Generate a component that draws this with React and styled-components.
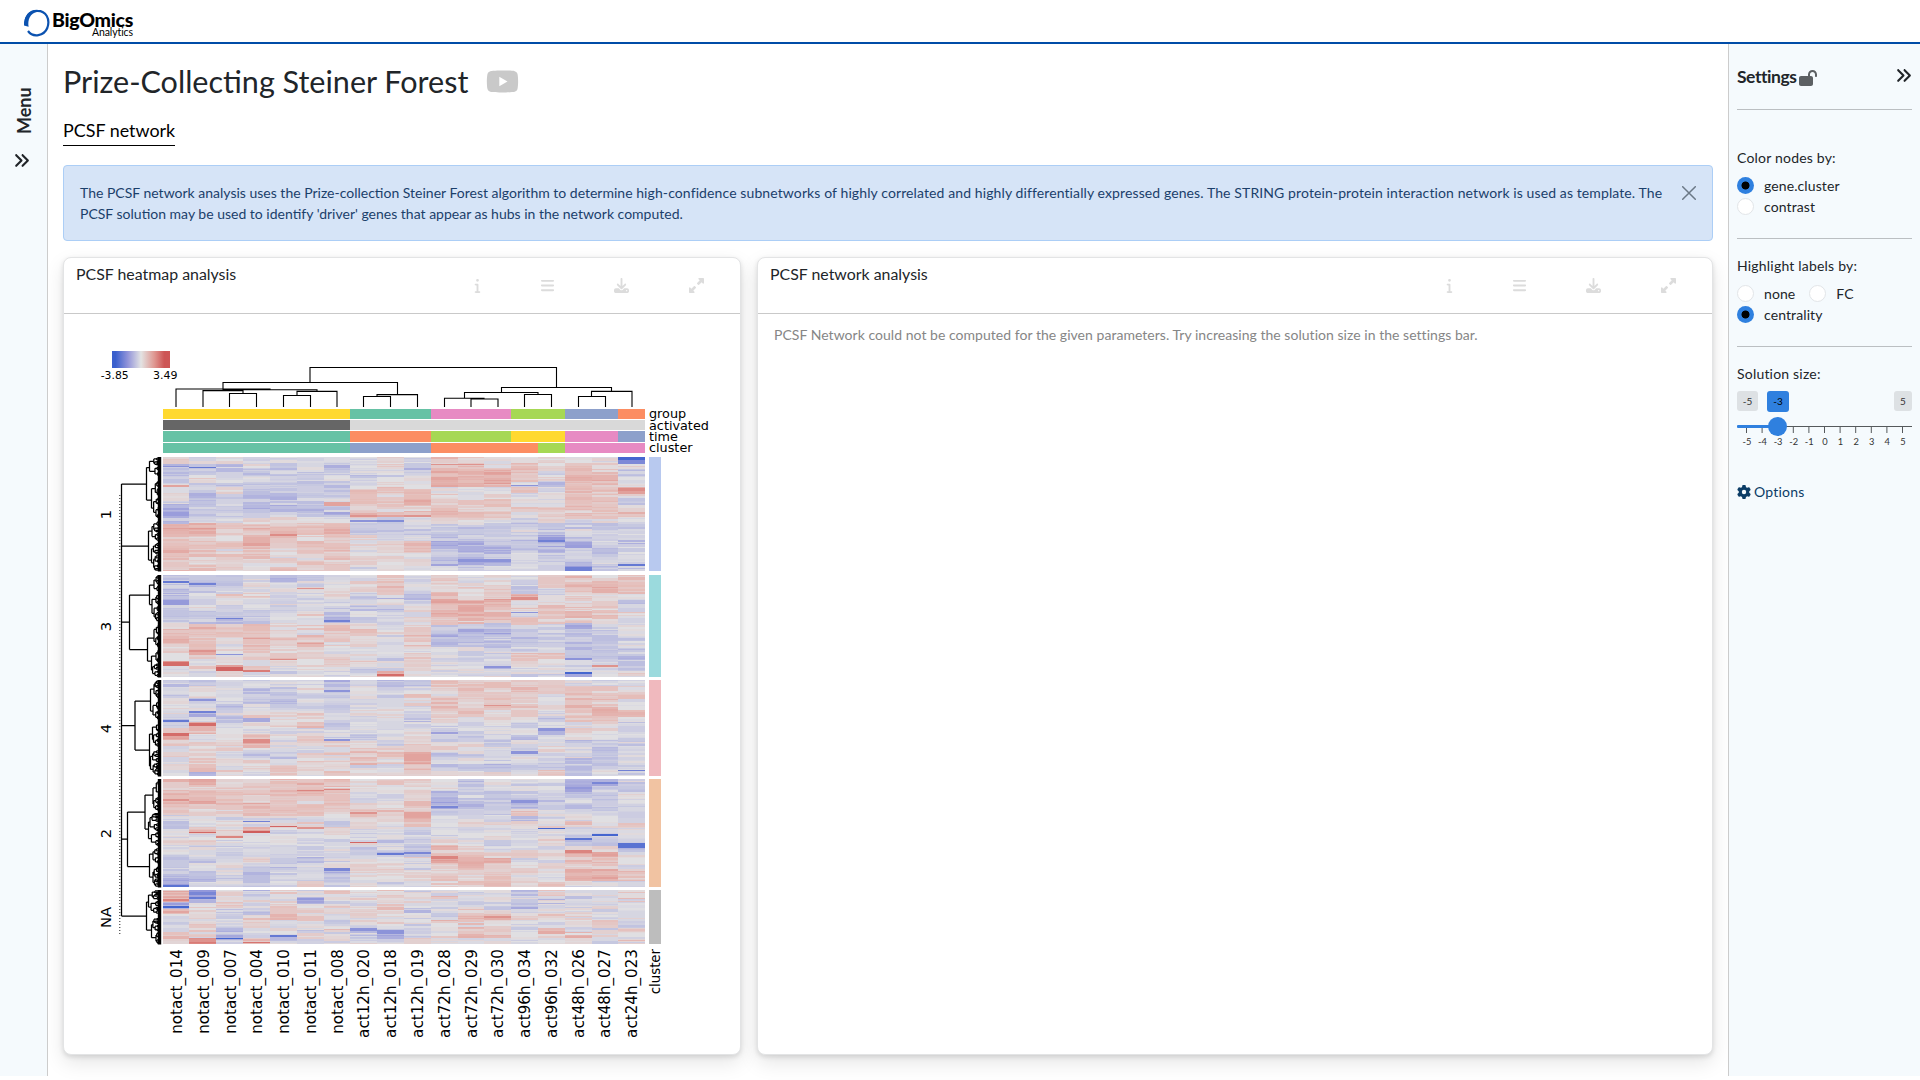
import React from 'react';
import styled, { createGlobalStyle, css } from 'styled-components';
import {
  FaYoutube, FaInfo, FaBars, FaDownload, FaAnglesRight, FaLockOpen, FaGear,
  FaUpRightAndDownLeftFromCenter,
} from 'react-icons/fa6';

const Global = createGlobalStyle`
  *, *::before { box-sizing: border-box; }
  body { margin: 0; background: #fff; color: #212529; font: 14px/21px Lato, sans-serif; overflow: hidden; }
`;

const Page = styled.div`
  display: flex;
  flex-direction: column;
  height: 1080px;
  width: 1920px;
`;
const Header = styled.header`
  height: 44px;
  flex: none;
  border-bottom: 2px solid #004ca7;
  padding: 9px 0 0 23px;
  display: flex;
  gap: 1px;
`;
const Brand = styled.div`
  display: flex;
  flex-direction: column;
  align-items: flex-end;
  width: 82px;
  color: #000;
`;
const BrandName = styled.div`
  font: 900 19.5px/22px Lato, sans-serif;
  letter-spacing: -0.3px;
  white-space: nowrap;
`;
const BrandSub = styled.div`
  font: 10.5px/10px Lato, sans-serif;
  margin-top: -4px;
  letter-spacing: -0.1px;
`;
const Body = styled.div`
  display: flex;
  height: 1036px;
`;
const LeftBar = styled.nav`
  width: 48px;
  height: 1032px;
  flex: none;
  background: #f5fafd;
  border-right: 1px solid #ccc;
  display: flex;
  flex-direction: column;
  align-items: center;
  padding: 43px 4px 0 0;
  gap: 18px;
`;
const MenuLabel = styled.div`
  writing-mode: vertical-rl;
  transform: rotate(180deg);
  font: 700 18px/22px Lato, sans-serif;
  height: 47px;
  margin-left: 4px;
`;
const Main = styled.main`
  flex: 1;
  min-width: 0;
  padding: 16px 15px 0;
  display: flex;
  flex-direction: column;
  overflow: hidden;
`;
const TitleRow = styled.div`
  display: flex;
  align-items: center;
  gap: 18px;
  height: 43px;
  color: #c9c9c9;
`;
const Title = styled.h1`
  margin: 0;
  color: #212529;
  font: 400 30.55px/42px Lato, sans-serif;
`;
const Tab = styled.div`
  align-self: flex-start;
  margin-top: 14px;
  height: 29px;
  border-bottom: 1px solid #000;
  color: #000;
  font: 17.9px/26px Lato, sans-serif;
`;
const Alert = styled.div`
  margin-top: 19px;
  height: 76px;
  border: 1px solid #accef6;
  border-radius: 4px;
  background: #d6e4f7;
  color: #1b3f6b;
  padding: 16px 16px 0 16px;
  display: flex;
  justify-content: space-between;
`;
const AlertText = styled.div`
  width: 1600px;
`;
const Spaced = styled.span`
  letter-spacing: 0.105px;
`;
const Cards = styled.div`
  display: flex;
  gap: 16px;
  margin-top: 16px;
`;
const Card = styled.section`
  width: ${(p) => p.$width}px;
  height: 798px;
  border: 1px solid #e3e4e5;
  border-radius: 8px;
  background: #fff;
  box-shadow: 0 8px 20px rgba(0, 0, 0, 0.1), 0 2px 5px rgba(0, 0, 0, 0.12);
`;
const CardHead = styled.div`
  height: 56px;
  border-bottom: 1px solid #c9c9c9;
  padding: 5px 36px 0 12px;
  display: flex;
  justify-content: space-between;
  font: 15.9px/22px Lato, sans-serif;
`;
const Tools = styled.div`
  display: flex;
  padding-top: 15px;
  color: #dcdcdc;
`;
const Tool = styled.span`
  display: flex;
  width: 16px;
  justify-content: center;
  margin-left: ${(p) => p.$gap}px;
`;
const Note = styled.p`
  margin: 10px 16px;
  color: #868686;
  letter-spacing: 0.035px;
`;
const RightBar = styled.aside`
  width: 192px;
  height: 1032px;
  flex: none;
  background: #f5fafd;
  border-left: 1px solid #ccc;
  padding: 21px 8px 0;
`;
const SettingsHead = styled.div`
  display: flex;
  height: 45px;
  border-bottom: 1px solid #bbbfc2;
  justify-content: space-between;
`;
const SettingsTitle = styled.div`
  display: flex;
  gap: 2px;
  font: 700 17.5px/24px Lato, sans-serif;
  letter-spacing: -0.45px;
  svg { margin-top: 4px; color: #5c6063; }
`;
const Group = styled.div`
  padding-top: ${(p) => p.$top}px;
  height: ${(p) => p.$height}px;
  border-bottom: ${(p) => (p.$last ? 0 : '1px solid #bbbfc2')};
`;
const Label = styled.div`
  letter-spacing: 0.2px;
  margin-bottom: 7px;
`;
const Options = styled.div`
  display: flex;
  flex-wrap: wrap;
  column-gap: 14px;
`;
const Radio = styled.label`
  display: flex;
  align-items: center;
  gap: 10px;
  height: 21px;
  letter-spacing: 0.1px;
  &::before {
    content: '';
    width: 17px;
    height: 17px;
    border-radius: 50%;
    background: #fff;
    border: 1px solid #e2e5e8;
    ${(p) => p.$on && css`
      border: 0;
      background: radial-gradient(circle, #000 3.6px, #2f80df 4.4px);
    `}
  }
`;
const OptionsLink = styled.div`
  display: flex;
  align-items: center;
  gap: 3px;
  color: #0b3c66;
  letter-spacing: 0.2px;
`;
const Badges = styled.div`
  display: flex;
  height: 21px;
`;
const Badge = styled.span`
  width: ${(p) => p.$w}px;
  height: ${(p) => (p.$on ? 21 : 20)}px;
  border-radius: 3px;
  background: ${(p) => (p.$on ? '#2f80df' : '#dde1e4')};
  margin-left: ${(p) => p.$ml}px;
  font: 10px/20px Lato, sans-serif;
  color: ${(p) => (p.$on ? '#000' : '#333')};
  text-align: center;
`;
const Scale = styled.svg`
  display: block;
  font-family: Lato, sans-serif;
  fill: #333;
`;
const CloseIcon = styled.svg`
  margin-top: 4px;
`;

const colEdges = [163, 189, 216, 243, 270, 297, 324, 350, 377, 404, 431, 458, 484, 511, 538, 565, 592, 618, 645];
const replicate = [0, 0, 0, 0, 0, 0, 0, 1, 1, 1, 2, 2, 2, 3, 3, 4, 4, 5];
const samples = ['notact_014', 'notact_009', 'notact_007', 'notact_004', 'notact_010', 'notact_011', 'notact_008',
  'act12h_020', 'act12h_018', 'act12h_019', 'act72h_028', 'act72h_029', 'act72h_030', 'act96h_034', 'act96h_032',
  'act48h_026', 'act48h_027', 'act24h_023'];

const G = '#66c2a5', O = '#fc8d62', B = '#8da0cb', P = '#e78ac3', L = '#a6d854', Y = '#ffd92f';
const annotations = [
  { name: 'group', y: 409, h: 10, base: 418, runs: [[163, Y], [350, G], [431, P], [511, L], [565, B], [618, O]] },
  { name: 'activated', y: 420, h: 10, base: 430, runs: [[163, '#666666'], [350, '#d9d9d9']] },
  { name: 'time', y: 431, h: 11, base: 441, runs: [[163, G], [350, O], [431, L], [511, Y], [565, P], [618, B]] },
  { name: 'cluster', y: 443, h: 10, base: 452, runs: [[163, G], [350, B], [431, O], [538, L], [565, P]] },
];

/* Expression profile of each cluster; one digit per sample, 0 = low, 9 = high. */
const slices = [
  { name: '1', y0: 457, y1: 571, label: 514, color: '#b8c9ef', noise: 0.8, rows: [
    '545444445465555440', '233434345366565655', '333333344377764663', '354433434477765774', '433333345477743665',
    '435333366644464668', '523223365654545664', '334333466766644663', '233222355565566665', '133343266666655666',
    '344555443455545454', '776666733333333333', '775676733333343444', '655765654433431333', '666766645622332243',
    '765655645632232434', '666655654433443434', '555555555521144344', '665565645443443133'] },
  { name: '3', y0: 575, y1: 677, label: 626, color: '#9bdadd', noise: 0.8, rows: [
    '333423446464546656', '323544456454535766', '334445556455534676', '345544533265574554', '144444444377755553',
    '343434333567656554', '333345344477746765', '332344244566665554', '676755654533343234', '666654665632233334',
    '765766654622333334', '664657554533333334', '575655444444444333', '554565543544466332', '845454654544454443',
    '458645534544344343', '445444447454444145'] },
  { name: '4', y0: 680, y1: 776, label: 728, color: '#f0b9be', noise: 0.8, rows: [
    '334444343366656444', '454345454456565665', '354333344556654666', '534324444565654664', '442433344465665764',
    '424555455456564666', '343255444354543664', '374456344444444443', '664444444444542553', '845656434543434444',
    '655745553544344333', '455444465654435434', '553335566733444434', '465545565744343334', '564565544633333334',
    '425465655555556344'] },
  { name: '2', y0: 779, y1: 887, label: 833, color: '#f1c3a2', noise: 0.8, rows: [
    '675566655543444224', '666667654543444133', '776666644533334334', '776565644623333434', '666766655622333334',
    '555666566633354434', '444444455744434443', '345465354645555655', '565744644344444444', '445444544444444344',
    '554454453354345333', '444444434365444552', '444444433366555774', '334533454587744664', '344334455456555664',
    '334344255556655776', '223244355565644776', '134345354456655444'] },
  { name: 'NA', y0: 890, y1: 944, label: 917, color: '#bdbdbd', noise: 1.2, rows: [
    '615354545444435545', '724442455554444345', '146454546544334444', '754365455345544444', '454575444446765545',
    '454544345465544554', '563554533446646445', '642435442456655654', '584643444544544545'] },
];
const streaks = [
  [0, 466, 1, -.6], [1, 467, 1, -.8], [0, 485, 2, .5], [7, 520, 2, -.6], [8, 520, 2, -.65], [7, 515, 2, .6], [8, 515, 2, .5], [9, 515, 2, .6],
  [4, 534, 2, .65], [6, 502, 4, .5], [14, 540, 2, -.75], [11, 559, 3, -.6], [12, 559, 3, -.6], [15, 567, 4, -.75], [17, 457, 3, -.95],
  [17, 564, 2, -.8], [17, 488, 3, .65], [13, 485, 1, -.6], [10, 464, 1, .6], [11, 464, 1, .6], [0, 581, 2, -.8], [1, 583, 2, -.75],
  [0, 600, 5, -.55], [5, 588, 1, .6], [2, 618, 1, -.75], [6, 620, 2, -.75], [13, 597, 3, .65], [13, 612, 1, -.6], [0, 662, 4, .85],
  [2, 667, 4, .9], [3, 670, 2, .75], [8, 674, 2, .85], [4, 659, 1, .65], [1, 650, 2, .6], [2, 654, 1, -.6], [12, 666, 2, -.6],
  [15, 672, 2, -.95], [15, 658, 2, -.6], [16, 665, 2, .6], [1, 711, 2, -.75], [0, 720, 2, -.8], [1, 723, 3, .85], [0, 733, 3, .85],
  [3, 739, 4, .65], [1, 699, 2, -.6], [6, 690, 2, -.6], [10, 732, 2, -.5], [14, 728, 3, -.6], [13, 751, 3, -.6], [9, 754, 7, .5],
  [17, 770, 1, -.75], [6, 739, 2, -.6], [12, 705, 1, .6], [0, 885, 2, -.85], [1, 832, 1, .9], [3, 831, 2, .95], [2, 836, 2, .7],
  [4, 826, 1, .9], [3, 821, 1, -.75], [7, 842, 1, .9], [8, 853, 2, -.8], [9, 852, 2, -.7], [5, 827, 2, .6], [6, 868, 3, -.7],
  [5, 790, 1, .7], [6, 789, 1, .7], [7, 812, 2, .6], [9, 812, 5, .5], [10, 806, 2, -.7], [14, 828, 1, -.95], [16, 834, 2, -.95],
  [15, 838, 2, -.85], [17, 843, 5, -.85], [10, 856, 3, .7], [15, 850, 3, .7], [13, 800, 3, -.6], [16, 782, 2, -.7], [0, 906, 2, -.95],
  [1, 892, 3, -.7], [1, 897, 2, -.8], [2, 938, 1, -.95], [4, 935, 2, -.8], [3, 942, 1, .8], [1, 939, 3, .6], [0, 899, 2, .7],
  [7, 928, 3, -.6], [8, 930, 4, -.6], [12, 916, 2, .6],
];

const stops = [[-1, 58, 95, 205], [-.75, 112, 128, 213], [-.5, 158, 160, 219], [-.25, 192, 194, 224], [0, 224, 223, 226],
  [.25, 229, 192, 188], [.5, 226, 163, 158], [.75, 217, 124, 119], [1, 205, 85, 85]];
function colorFor(v) {
  const c = Math.max(-1, Math.min(0.999, v));
  const i = Math.min(7, Math.floor((c + 1) * 4));
  const t = (c - stops[i][0]) * 4;
  return `rgb(${[1, 2, 3].map((k) => Math.round(stops[i][k] + (stops[i + 1][k] - stops[i][k]) * t)).join(',')})`;
}
function seeded(seed) {
  let s = seed;
  return () => {
    s = (s * 1664525 + 1013904223) % 4294967296;
    return s / 4294967296;
  };
}
function buildHeat() {
  const rnd = seeded(77);
  const paths = {};
  const put = (c, y, h, v) => {
    const key = colorFor(Math.round(v * 25) / 25);
    paths[key] = (paths[key] || '') + `M${colEdges[c]} ${y}H${colEdges[c + 1]}v${h}H${colEdges[c]}z`;
  };
  const bell = () => rnd() + rnd() + rnd() - 1.5;
  slices.forEach((s) => {
    const shared = Array.from({ length: 6 }, () => Array.from({ length: 120 }, bell));
    for (let c = 0; c < 18; c += 1) {
      let y = s.y0;
      while (y < s.y1) {
        const h = Math.min(s.y1 - y, rnd() < 0.5 ? 1 : rnd() < 0.7 ? 2 : 3);
        const row = s.rows[Math.min(s.rows.length - 1, Math.floor((y - s.y0) / 6))];
        const n = bell() * 0.17 * s.noise + shared[replicate[c]][y - s.y0] * 0.08;
        put(c, y, h, (Number(row[c]) - 4.4) * 0.145 + n);
        y += h;
      }
    }
  });
  const over = streaks.map(([c, y, h, v]) => ({ x: colEdges[c], w: colEdges[c + 1] - colEdges[c], y, h, fill: colorFor(v) }));
  return { paths, over };
}
const heat = buildHeat();

/* Bracket: [left x, right x, bar y, left leg end, right leg end] */
const brackets = [
  [310, 556.5, 367.5, 382.5, 387.5], [223, 397.5, 382.5, 389, 394.5], [176, 270, 389, 407, 389.5], [223, 317, 389.7, 390.5, 391.5],
  [203, 243, 390.6, 407, 393.5], [229.5, 256.5, 393.5, 407, 407], [297, 337, 391.4, 395.5, 407], [283.5, 310.5, 395.5, 407, 407],
  [377, 417.5, 394.6, 396.5, 407], [363.5, 390.5, 396.5, 407, 407], [501.5, 611.5, 387.5, 392.5, 391.5], [464.5, 538, 392.5, 398.5, 394.5],
  [444.5, 484, 398.3, 407, 399], [471, 498, 399, 407, 407], [524.5, 551.5, 394.5, 407, 407], [591.5, 632, 391.4, 396.5, 407],
  [578.5, 605.5, 396.5, 407, 407],
];
const columnTree = brackets.map(([a, b, y, l, r]) => `M${a} ${l}V${y}H${b}V${r}`).join('');

/* Stem position, split x, then for both halves [y, next x, from, to] */
const rowTrees = [
  { x: 121.5, y: 484, cx: 146.5, top: [467.5, 149.5, 457, 477], bot: [500, 151.5, 480, 519] },
  { x: 121.5, y: 546, cx: 148.5, top: [531, 152, 521, 541], bot: [560, 151.5, 543, 571] },
  { x: 129.5, y: 595, cx: 149.5, top: [585, 154, 575, 592], bot: [604.5, 152, 594, 622] },
  { x: 129.5, y: 649.5, cx: 147.5, top: [638, 154, 624, 648], bot: [661, 151.5, 649, 677] },
  { x: 135, y: 701, cx: 150.5, top: [689, 154, 680, 699], bot: [711, 153, 701, 720] },
  { x: 135, y: 750, cx: 149.5, top: [734, 152.5, 722, 747], bot: [766, 150.5, 750, 776] },
  { x: 127.5, y: 812, cx: 145, top: [795, 153, 779, 811], bot: [829, 148.5, 813, 846] },
  { x: 127.5, y: 866.5, cx: 149.5, top: [854, 153, 848, 864], bot: [877, 153, 866, 887] },
  { x: 121.5, y: 916, cx: 146.5, top: [902, 148.5, 890, 914], bot: [930, 151.5, 918, 944] },
];
function buildRowTree() {
  const rnd = seeded(5);
  let d = 'M121.5 484V916M121.5 622H129.5M129.5 595V649.5M121.5 725.5H135M135 701V750M121.5 839H127.5M127.5 812V866.5';
  const grow = (px, y, x, y0, y1) => {
    d += `M${px} ${y}H${x}`;
    const span = y1 - y0;
    if (span < 2 || x > 158.3) {
      d += `M${x} ${y}H160`;
      return;
    }
    const mid = y0 + span * (0.38 + rnd() * 0.24);
    const a = (y0 + mid) / 2;
    const b = (mid + y1) / 2;
    d += `M${x} ${a}V${b}`;
    const step = () => Math.min(158.6, x + 0.8 + rnd() * (159 - x) * 0.5);
    grow(x, a, step(), y0, mid);
    grow(x, b, step(), mid, y1);
  };
  rowTrees.forEach((t) => {
    d += `M${t.x} ${t.y}H${t.cx}M${t.cx} ${t.top[0]}V${t.bot[0]}`;
    grow(t.cx, t.top[0], t.top[1], t.top[2], t.top[3]);
    grow(t.cx, t.bot[0], t.bot[1], t.bot[2], t.bot[3]);
  });
  return d;
}
const rowTree = buildRowTree();

const Plot = styled.svg`
  display: block;
  font-family: 'DejaVu Sans', sans-serif;
  fill: #000;
`;

function Heatmap() {
  return (
    <Plot width="676" height="740" viewBox="64 314 676 740">
      <defs>
        <linearGradient id="scale">
          <stop offset="0.06" stopColor="#3a5fcd" />
          <stop offset="0.27" stopColor="#9193d9" />
          <stop offset="0.5" stopColor="#e3e3e3" />
          <stop offset="0.73" stopColor="#df9791" />
          <stop offset="0.9" stopColor="#cd5555" />
        </linearGradient>
      </defs>
      <rect x="112" y="351" width="58" height="17" fill="url(#scale)" />
      <text x="100.7" y="379" fontSize="10.8">-3.85</text>
      <text x="153" y="379" fontSize="11">3.49</text>
      <path d={columnTree} fill="none" stroke="#000" strokeWidth="1.1" />
      <path d={rowTree} fill="none" stroke="#000" strokeWidth="1.25" />
      <path d="M119.8 495V934" fill="none" stroke="#000" strokeWidth="0.9" strokeDasharray="1 2" />
      {annotations.map((a) => (
        <g key={a.name}>
          {a.runs.map(([x, color], i) => (
            <rect key={x} x={x} y={a.y} height={a.h} width={(a.runs[i + 1] ? a.runs[i + 1][0] : 645) - x} fill={color} />
          ))}
          <text x="649" y={a.base} fontSize="12.8">{a.name}</text>
        </g>
      ))}
      <g shapeRendering="crispEdges">
        {Object.entries(heat.paths).map(([color, d]) => <path key={color} d={d} fill={color} />)}
        {heat.over.map((r, i) => <rect key={i} x={r.x} y={r.y} width={r.w} height={r.h} fill={r.fill} />)}
      </g>
      {slices.map((s) => (
        <g key={s.name}>
          <rect x="157.8" y={s.y0} width="3.4" height={s.y1 - s.y0 + 0.5} />
          <rect x="649" y={s.y0} width="12" height={s.y1 - s.y0} fill={s.color} />
          <text transform={`translate(110.7 ${s.label + 0.5}) rotate(-90)`} textAnchor="middle" fontSize="14.8">{s.name}</text>
        </g>
      ))}
      {samples.map((name, i) => (
        <text key={name} transform={`translate(${182 + i * 26.78} 949) rotate(-90)`} textAnchor="end" fontSize="15.15">{name}</text>
      ))}
      <text transform="translate(660 949) rotate(-90)" textAnchor="end" fontSize="13.3">cluster</text>
    </Plot>
  );
}

function CardTools() {
  return (
    <Tools>
      <Tool $gap={0}><FaInfo size={15} /></Tool>
      <Tool $gap={54}><FaBars size={15} /></Tool>
      <Tool $gap={58}><FaDownload size={15} /></Tool>
      <Tool $gap={59}><FaUpRightAndDownLeftFromCenter size={15} /></Tool>
    </Tools>
  );
}

function Slider() {
  const ticks = Array.from({ length: 11 }, (_, i) => i - 5);
  return (
    <Scale width="176" height="40" viewBox="0 0 176 40" fontSize="9.3">
      <path d="M0 14.5H175" stroke="#55595c" />
      {ticks.map((t, i) => (
        <g key={t}>
          <path d={`M${9.5 + i * 15.6} 15V21`} stroke="#55595c" />
          <text x={9.9 + i * 15.6} y="33" textAnchor="middle">{t}</text>
        </g>
      ))}
      <rect y="13" width="36" height="3" rx="1" fill="#2f80df" />
      <circle cx="40.5" cy="14.5" r="9.5" fill="#2f80df" />
    </Scale>
  );
}

export default function App() {
  return (
    <>
      <Global />
      <Page>
        <Header>
          <svg width="27" height="28" viewBox="23 9 27 28">
            <path d="M28 31C33 38 44 36 47.3 28 50.5 19 46 10.8 37.5 10.8 29 10.6 25 17 25.6 24" fill="none" stroke="#0b52b0" strokeWidth="2.2" />
            <path d="M36.5 10C29 10 23.6 16.500 24 25.500l4.600 1.200C27.500 20 30 13 37.500 11.800z" fill="#0b52b0" />
          </svg>
          <Brand>
            <BrandName>BigOmics</BrandName>
            <BrandSub>Analytics</BrandSub>
          </Brand>
        </Header>
        <Body>
          <LeftBar>
            <MenuLabel>Menu</MenuLabel>
            <FaAnglesRight size={17} />
          </LeftBar>
          <Main>
            <TitleRow>
              <Title>Prize-Collecting Steiner Forest</Title>
              <FaYoutube size={33} />
            </TitleRow>
            <Tab>PCSF network</Tab>
            <Alert>
              <AlertText>
                The PCSF network analysis uses the Prize-collection Steiner Forest algorithm to determine{' '}
                <Spaced>
                  high-confidence subnetworks of highly correlated and highly differentially expressed genes. The STRING
                  protein-protein interaction network is used as template. The
                </Spaced>{' '}
                PCSF solution may be used to identify 'driver' genes that appear as hubs in the network computed.
              </AlertText>
              <CloseIcon width="14" height="14" viewBox="0 0 14 14">
                <path d="M.7.7l12.6 12.6M13.3.7L.7 13.3" stroke="#6b7886" strokeWidth="1.5" strokeLinecap="round" />
              </CloseIcon>
            </Alert>
            <Cards>
              <Card $width={678}>
                <CardHead>PCSF heatmap analysis<CardTools /></CardHead>
                <Heatmap />
              </Card>
              <Card $width={956}>
                <CardHead>PCSF network analysis<CardTools /></CardHead>
                <Note>PCSF Network could not be computed for the given parameters. Try increasing the solution size in the settings bar.</Note>
              </Card>
            </Cards>
          </Main>
          <RightBar>
            <SettingsHead>
              <SettingsTitle>Settings<FaLockOpen size={18} /></SettingsTitle>
              <FaAnglesRight size={17} style={{ marginTop: 2 }} />
            </SettingsHead>
            <Group $top={37} $height={129}>
              <Label>Color nodes by:</Label>
              <Options>
                <Radio $on>gene.cluster</Radio>
                <Radio>contrast</Radio>
              </Options>
            </Group>
            <Group $top={16} $height={108}>
              <Label>Highlight labels by:</Label>
              <Options>
                <Radio>none</Radio>
                <Radio>FC</Radio>
                <Radio $on>centrality</Radio>
              </Options>
            </Group>
            <Group $top={16} $height={134} $last>
              <Label>Solution size:</Label>
              <Badges>
                <Badge $w={21} $ml={0}>-5</Badge>
                <Badge $w={22} $ml={9} $on>-3</Badge>
                <Badge $w={18} $ml={105}>5</Badge>
              </Badges>
              <Slider />
            </Group>
            <OptionsLink><FaGear size={14} />Options</OptionsLink>
          </RightBar>
        </Body>
      </Page>
    </>
  );
}
